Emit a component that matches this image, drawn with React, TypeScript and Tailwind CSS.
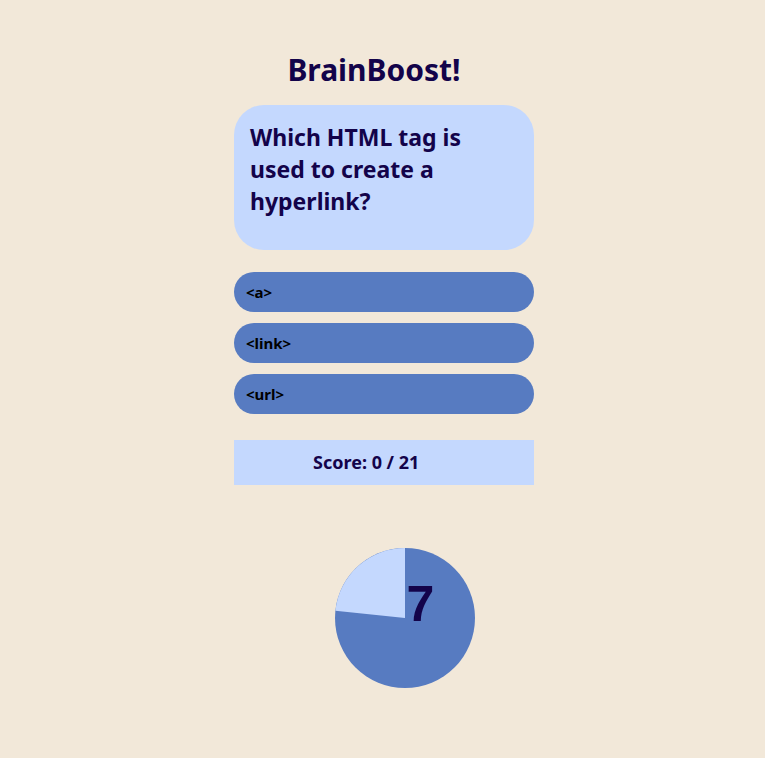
const ink = "text-[#13034a]";

function Pie({ value, total }: { value: number; total: number }) {
  const r = 70;
  const a = (value / total) * Math.PI * 2;
  const x = 70 - r * Math.sin(a);
  const y = 70 - r * Math.cos(a);
  return (
    <div className="relative w-[140px] h-[140px]">
      <svg width="140" height="140" viewBox="0 0 140 140">
        <circle cx="70" cy="70" r="70" fill="#577bc1" />
        <path d={`M70 70 L70 0 A70 70 0 0 0 ${x} ${y} Z`} fill="#c4d8fe" />
      </svg>
      <span
        className={`absolute left-[72px] top-[31px] text-[50px] leading-none font-bold ${ink}`}
        style={{ fontFamily: '"Liberation Sans", Arial, sans-serif' }}
      >
        {value}
      </span>
    </div>
  );
}

export default function App() {
  const options = ["<a>", "<link>", "<url>"];
  return (
    <div
      className="min-h-[758px] w-full bg-[#f2e8d9] flex flex-col items-center pl-[3px]"
      style={{ fontFamily: '"Noto Sans", "Open Sans", sans-serif' }}
    >
      <div className="w-[300px] flex flex-col pt-[48px]">
        <h1 className={`text-[30px] leading-[44px] font-bold text-center pr-[20px] ${ink}`}>
          BrainBoost!
        </h1>
        <div className="mt-[13px] h-[145px] rounded-[30px] bg-[#c4d8fe] px-[16px] pt-[16px]">
          <p className={`text-[23px] leading-[32px] font-bold ${ink}`}>
            <span className="block">Which HTML tag is</span>
            <span className="block">used to create a</span>
            <span className="block">hyperlink?</span>
          </p>
        </div>
        <div className="mt-[22px] flex flex-col gap-[11px]">
          {options.map((o) => (
            <button
              key={o}
              className="h-[40px] rounded-full bg-[#577bc1] text-left pl-[12px] text-[15px] font-bold text-black"
            >
              {o}
            </button>
          ))}
        </div>
        <div className={`mt-[26px] h-[45px] bg-[#c4d8fe] flex items-center pl-[79px] text-[18px] font-bold ${ink}`}>
          Score: 0 / 21
        </div>
      </div>
      <div className="mt-[63px] pl-[41px]">
        <Pie value={7} total={30} />
      </div>
    </div>
  );
}
